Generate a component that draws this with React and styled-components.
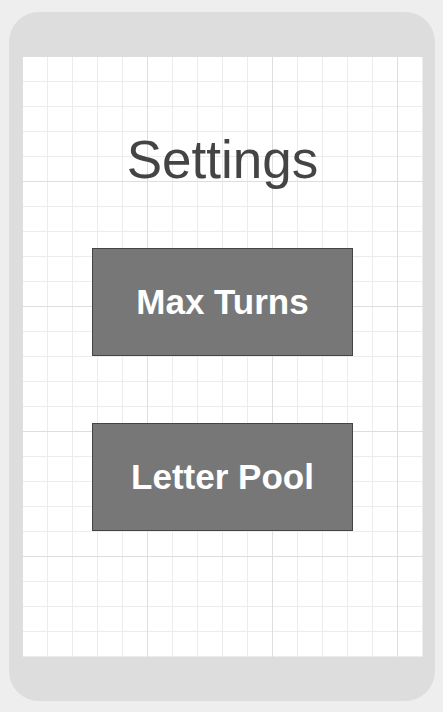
import React from "react";
import styled, { createGlobalStyle } from "styled-components";

const GlobalStyle = createGlobalStyle`
  html, body {
    margin: 0;
    padding: 0;
    background: #eeeeee;
    font-family: "Liberation Sans", Arial, sans-serif;
  }
`;

const Page = styled.div`
  padding: 12px 9px;
`;

const Phone = styled.div`
  width: 426px;
  height: 689px;
  box-sizing: border-box;
  padding: 45px 12px 44px 13px;
  background: #dddddd;
  border-radius: 30px;
`;

const Screen = styled.div`
  width: 401px;
  height: 600px;
  display: flex;
  flex-direction: column;
  align-items: center;
  background-color: #ffffff;
  background-image: linear-gradient(to right, #dedede 1px, transparent 1px),
    linear-gradient(to bottom, #dedede 1px, transparent 1px),
    linear-gradient(to right, #ececec 1px, transparent 1px),
    linear-gradient(to bottom, #ececec 1px, transparent 1px);
  background-size: 125px 125px, 125px 125px, 25px 25px, 25px 25px;
  background-position: 0 -1px, 0 -1px, 0 -1px, 0 -1px;
`;

const Title = styled.h1`
  margin: 73px 0 58px;
  font-size: 53px;
  font-weight: 400;
  color: #444444;
  line-height: 60px;
`;

const Menu = styled.div`
  display: flex;
  flex-direction: column;
  gap: 67px;
`;

const MenuButton = styled.button`
  width: 261px;
  height: 108px;
  box-sizing: border-box;
  background: #777777;
  border: 1px solid #444444;
  color: #ffffff;
  font-family: "Liberation Sans", Arial, sans-serif;
  font-size: 35px;
  font-weight: 700;
  cursor: pointer;
`;

export default function App() {
  return (
    <Page>
      <GlobalStyle />
      <Phone>
        <Screen>
          <Title>Settings</Title>
          <Menu>
            <MenuButton>Max Turns</MenuButton>
            <MenuButton>Letter Pool</MenuButton>
          </Menu>
        </Screen>
      </Phone>
    </Page>
  );
}
